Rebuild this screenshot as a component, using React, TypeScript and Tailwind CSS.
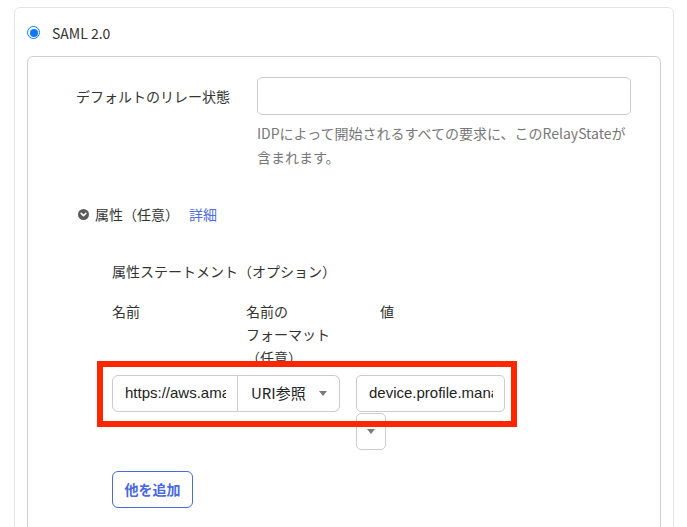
import React from "react";

const jp = { fontFamily: '"Noto Sans CJK JP", "Noto Sans", sans-serif' };
const sys = { fontFamily: '"Liberation Sans", Arial, sans-serif' };

function Caret() {
  return (
    <svg width="8" height="5" viewBox="0 0 8 5" className="block shrink-0">
      <path d="M0 0 L8 0 L4 5 Z" fill="#7a7a7a" />
    </svg>
  );
}

function ChevronCircle() {
  return (
    <svg width="11" height="11" viewBox="0 0 11 11" className="block">
      <circle cx="5.5" cy="5.5" r="5.5" fill="#5a5a5a" />
      <path d="M3.2 4.4 L5.5 6.7 L7.8 4.4" stroke="#fff" strokeWidth="1.6" fill="none" strokeLinecap="round" strokeLinejoin="round" />
    </svg>
  );
}

export default function App() {
  return (
    <div className="relative h-[527px] w-[687px] overflow-hidden bg-white text-[#333]" style={jp}>
      {/* outer card */}
      <div className="ml-[14px] mt-[7px] w-[660px] rounded-md border border-[#e4e4e4] px-[12px] pb-[40px]">
        <div className="flex h-[48px] items-center gap-[12px] pl-[-1px] pt-[1px]">
          <span className="flex h-[13px] w-[13px] items-center justify-center rounded-full border-[1.5px] border-[#0a78ff]">
            <span className="h-[8px] w-[8px] rounded-full bg-[#0a78ff]" />
          </span>
          <span className="text-[14px] leading-[20px] text-[#333]">SAML 2.0</span>
        </div>

        {/* inner card */}
        <div className="rounded-md border border-[#cfcfcf] pb-[40px] pl-[48px] pt-[20px]">
          <div className="flex items-center">
            <div className="w-[181px] text-[14px] text-[#333]">デフォルトのリレー状態</div>
            <div className="h-[38px] w-[374px] rounded-[5px] border border-[#cccccc] bg-white" />
          </div>
          <div className="ml-[181px] mt-[6px] w-[395px] text-[14px] leading-[24px] text-[#777]">
            IDPによって開始されるすべての要求に、このRelayStateが
            <br />
            含まれます。
          </div>

          <div className="mt-[33px] flex items-center text-[14px] leading-[24px]">
            <span className="ml-[2px] mr-[6px]">
              <ChevronCircle />
            </span>
            <span className="text-[#333]">属性（任意）</span>
            <span className="ml-[10px] text-[#4d6fe3]">詳細</span>
          </div>

          <div className="ml-[36px]">
            <div className="mt-[33px] text-[14px] leading-[24px] text-[#333]">属性ステートメント（オプション）</div>

            <div className="mt-[17px] flex text-[14px] leading-[23px] text-[#333]">
              <div className="w-[134px]">名前</div>
              <div className="w-[134px]">
                名前の
                <br />
                フォーマット
                <br />
                （任意）
              </div>
              <div>値</div>
            </div>

            <div className="mt-[6px] flex items-start">
              <div className="flex h-[37px]">
                <div className="flex w-[126px] items-center rounded-l-[6px] border border-[#cccccc] pl-[12px] pr-[11px]">
                  <span className="block overflow-hidden whitespace-nowrap text-[15px] text-[#222]" style={sys}>
                    https://aws.amazon.com/SAML
                  </span>
                </div>
                <div className="flex w-[102px] items-center justify-between rounded-r-[6px] border border-l-0 border-[#cccccc] pl-[13px] pr-[12px]">
                  <span className="text-[15px] text-[#222]">URI参照</span>
                  <Caret />
                </div>
              </div>
              <div className="ml-[16px] flex flex-col">
                <div className="flex h-[37px] w-[149px] items-center rounded-[5px] border border-[#cccccc] pl-[12px] pr-[11px]">
                  <span className="block overflow-hidden whitespace-nowrap text-[15px] text-[#222]" style={sys}>
                    device.profile.managementId
                  </span>
                </div>
                <div className="mt-[1px] flex h-[37px] w-[30px] items-center justify-center rounded-[5px] border border-[#cccccc]">
                  <Caret />
                </div>
              </div>
            </div>

            <button className="mt-[21px] flex h-[37px] w-[81px] items-center justify-center rounded-[6px] border border-[#4a68e0] bg-white text-[14px] font-bold text-[#4a68e0]">
              他を追加
            </button>
          </div>
        </div>
      </div>

      {/* highlight box */}
      <div className="absolute left-[97px] top-[361px] h-[66px] w-[420px] border-[6px] border-[#ff2600]" />
    </div>
  );
}
